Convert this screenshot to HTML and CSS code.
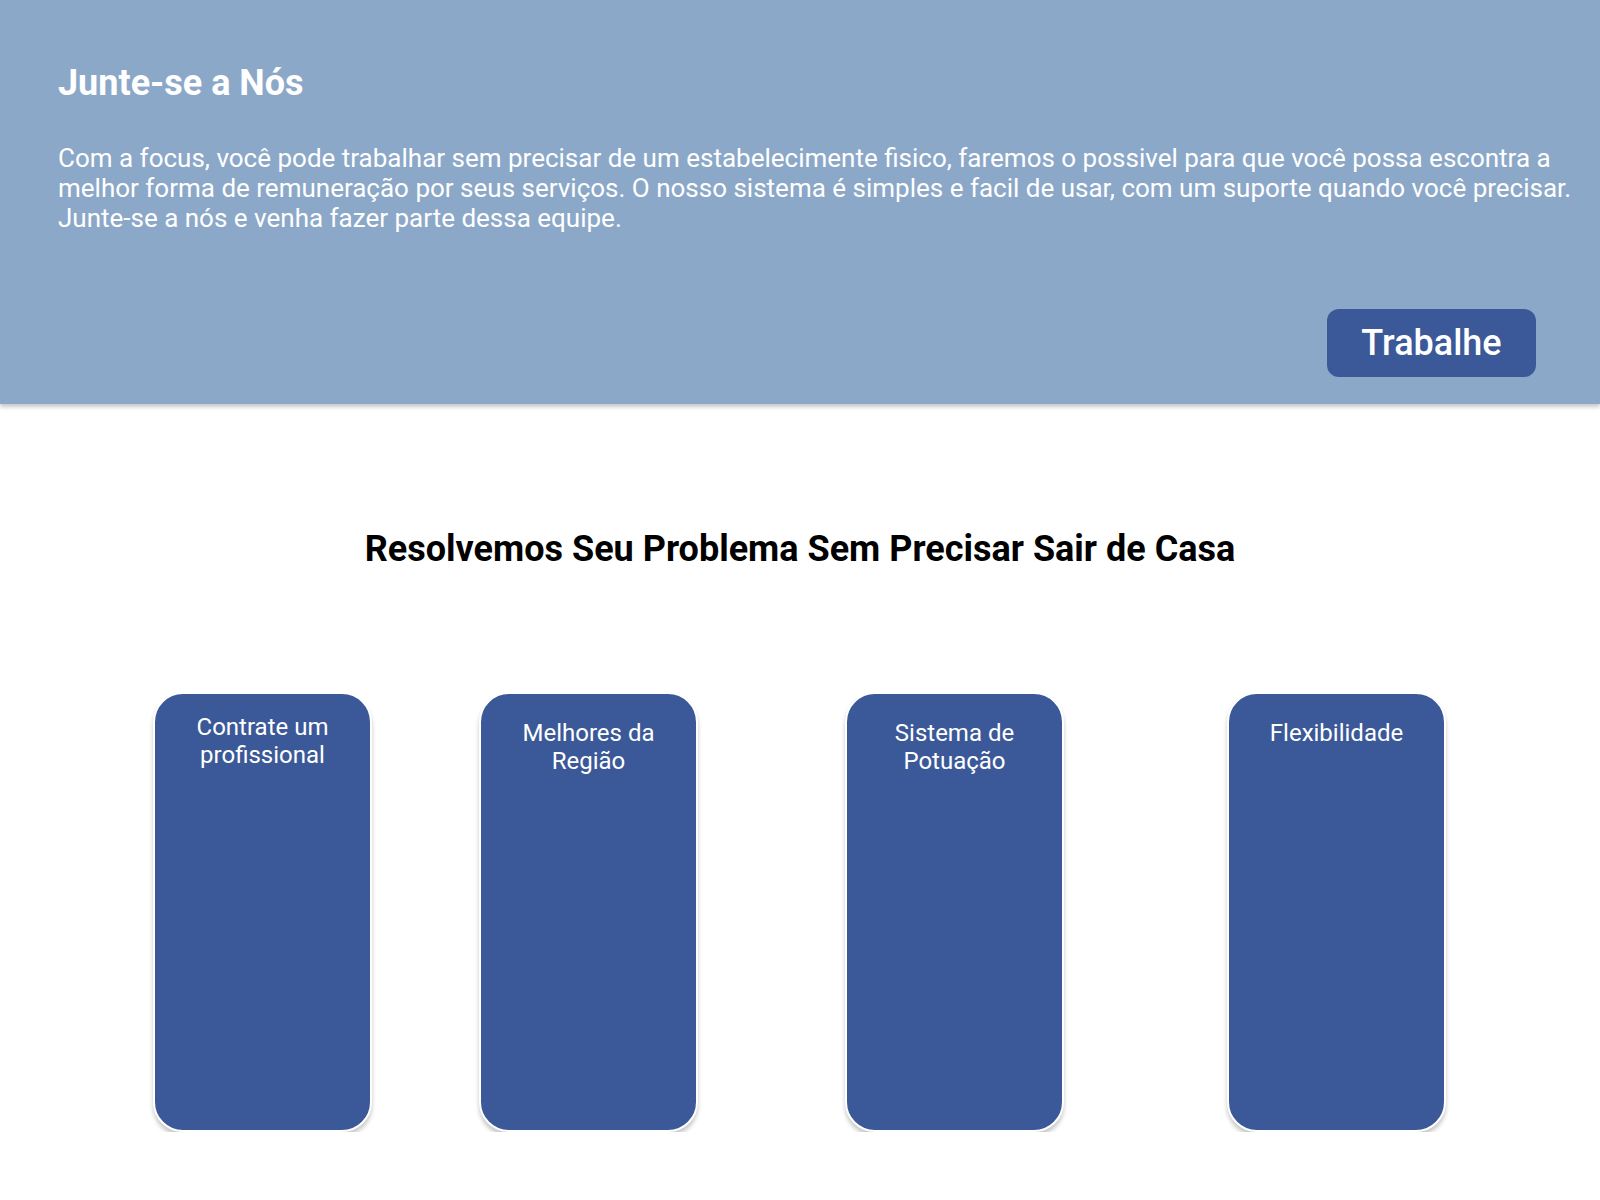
FILE: index.html
```html
<!DOCTYPE html>
<html lang="pt-BR">
<head>
<meta charset="utf-8">
<title>Junte-se a Nós</title>
<link rel="stylesheet" href="styles.css">
</head>
<body>
  <header class="hero">
    <h1 class="hero-title">Junte-se a Nós</h1>
    <p class="hero-text">Com a focus, você pode trabalhar sem precisar de um estabelecimente fisico, faremos o possivel para que você possa escontra a melhor forma de remuneração por seus serviços. O nosso sistema é simples e facil de usar, com um suporte quando você precisar. Junte-se a nós e venha fazer parte dessa equipe.</p>
    <div class="hero-actions">
      <button class="btn-work" type="button">Trabalhe</button>
    </div>
  </header>

  <main class="features">
    <h2 class="features-title">Resolvemos Seu Problema Sem Precisar Sair de Casa</h2>
    <div class="cards">
      <div class="card card-1"><p class="card-text">Contrate um profissional</p></div>
      <div class="card card-2"><p class="card-text">Melhores da Região</p></div>
      <div class="card card-3"><p class="card-text">Sistema de Potuação</p></div>
      <div class="card card-4"><p class="card-text">Flexibilidade</p></div>
    </div>
  </main>
</body>
</html>
```

FILE: styles.css
```css
* { box-sizing: border-box; }

html, body {
  margin: 0;
  padding: 0;
  background: #ffffff;
  font-family: Roboto, "Liberation Sans", Arial, sans-serif;
}

.hero {
  height: 404px;
  background: #8ca8c8;
  padding: 62px 22px 0 58px;
  display: flex;
  flex-direction: column;
  box-shadow: 0 3px 4px rgba(0, 0, 0, 0.22);
  position: relative;
}

.hero-title {
  margin: 0;
  color: #ffffff;
  font-size: 36px;
  line-height: 42px;
  font-weight: 700;
}

.hero-text {
  margin: 39px 0 0;
  color: #ffffff;
  font-size: 26px;
  line-height: 30px;
  font-weight: 400;
}

.hero-actions {
  margin-top: auto;
  display: flex;
  justify-content: flex-end;
  padding: 0 42px 27px 0;
}

.btn-work {
  width: 209px;
  height: 68px;
  border: none;
  border-radius: 12px;
  background: #3b5998;
  color: #ffffff;
  font-family: Roboto, "Liberation Sans", Arial, sans-serif;
  font-size: 36px;
  font-weight: 500;
  padding: 0;
}

.features {
  padding-top: 124px;
}

.features-title {
  margin: 0;
  text-align: center;
  color: #000000;
  font-size: 36px;
  line-height: 42px;
  font-weight: 700;
}

.cards {
  display: flex;
  align-items: flex-start;
  padding: 122px 0 0 153px;
}

.card {
  width: 219px;
  height: 440px;
  background: #3b5998;
  border: 2px solid #ffffff;
  border-radius: 30px;
  box-shadow: 0 4px 4px rgba(0, 0, 0, 0.22);
  padding: 25px 20px 0;
  text-align: center;
}

.card-1 { padding-top: 19px; }
.card-2 { margin-left: 107px; }
.card-3 { margin-left: 147px; }
.card-4 { margin-left: 163px; }

.card-text {
  margin: 0;
  color: #ffffff;
  font-size: 24px;
  line-height: 28px;
  font-weight: 400;
}
```
